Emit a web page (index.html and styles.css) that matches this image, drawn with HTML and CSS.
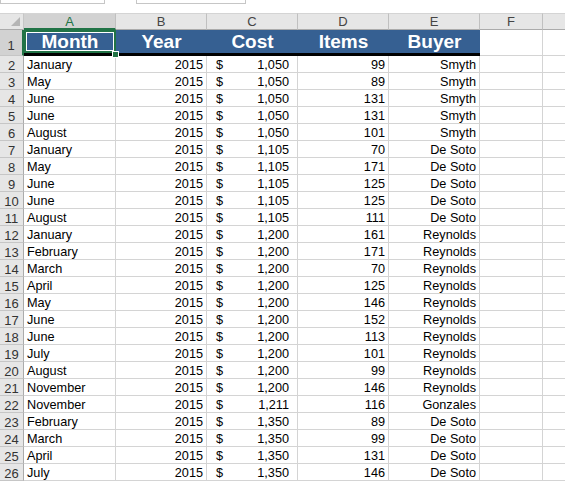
FILE: index.html
```html
<!DOCTYPE html>
<html>
<head>
<meta charset="utf-8">
<link rel="stylesheet" href="styles.css">
</head>
<body>
<div class="topbar">
  <div class="namebox"></div>
  <div class="fxbox"></div>
</div>
<div class="sheet" id="sheet">
  <div class="corner"><span class="tri"></span></div>
  <div class="colh sel">A</div>
  <div class="colh">B</div>
  <div class="colh">C</div>
  <div class="colh">D</div>
  <div class="colh">E</div>
  <div class="colh">F</div>
  <div class="colh last"></div>

  <div class="rowh rowh1 sel">1</div>
  <div class="hd hdA">Month<span class="selbox"></span><span class="handle"></span></div>
  <div class="hd">Year</div>
  <div class="hd">Cost</div>
  <div class="hd">Items</div>
  <div class="hd">Buyer</div>
  <div class="c r1"></div>
  <div class="c r1 last"></div>
</div>
<script src="app.js"></script>
</body>
</html>
```

FILE: app.js
```js
var rows = [
["January",1050,99,"Smyth"],
["May",1050,89,"Smyth"],
["June",1050,131,"Smyth"],
["June",1050,131,"Smyth"],
["August",1050,101,"Smyth"],
["January",1105,70,"De Soto"],
["May",1105,171,"De Soto"],
["June",1105,125,"De Soto"],
["June",1105,125,"De Soto"],
["August",1105,111,"De Soto"],
["January",1200,161,"Reynolds"],
["February",1200,171,"Reynolds"],
["March",1200,70,"Reynolds"],
["April",1200,125,"Reynolds"],
["May",1200,146,"Reynolds"],
["June",1200,152,"Reynolds"],
["June",1200,113,"Reynolds"],
["July",1200,101,"Reynolds"],
["August",1200,99,"Reynolds"],
["November",1200,146,"Reynolds"],
["November",1211,116,"Gonzales"],
["February",1350,89,"De Soto"],
["March",1350,99,"De Soto"],
["April",1350,131,"De Soto"],
["July",1350,146,"De Soto"]
];
var sheet = document.getElementById("sheet");
function cell(cls, html) {
  var d = document.createElement("div");
  d.className = cls;
  d.innerHTML = html;
  sheet.appendChild(d);
}
function fmt(n) {
  var s = String(n);
  return s.length > 3 ? s.slice(0, s.length - 3) + "," + s.slice(-3) : s;
}
rows.forEach(function (r, i) {
  cell("rowh", String(i + 2));
  cell("c left", r[0]);
  cell("c right", "2015");
  cell("c acct", '<span>$</span><span>' + fmt(r[1]) + '</span>');
  cell("c right", String(r[2]));
  cell("c right", r[3]);
  cell("c", "");
  cell("c last", "");
});
```

FILE: styles.css
```css
html, body {
  margin: 0;
  padding: 0;
  background: #fff;
  overflow: hidden;
}
body {
  font-family: "Liberation Sans", Arial, sans-serif;
  width: 565px;
  height: 484px;
}
.topbar {
  height: 13px;
  display: flex;
  background: #fff;
  box-sizing: border-box;
}
.namebox {
  width: 105px;
  height: 4px;
  box-sizing: border-box;
  border: 1px solid #c6c6c6;
  border-top: none;
  background: #fff;
}
.fxbox {
  margin-left: 31px;
  width: 110px;
  height: 4px;
  box-sizing: border-box;
  border: 1px solid #c6c6c6;
  border-top: none;
  background: #fff;
}
.sheet {
  display: grid;
  grid-template-columns: 24px 92px 91px 91px 91px 91px 63px 1fr;
  grid-template-rows: 17px 26px;
  grid-auto-rows: 17px;
}
.sheet > div {
  box-sizing: border-box;
  white-space: nowrap;
  overflow: hidden;
}
.corner {
  background: #e6e6e6;
  border-right: 1px solid #c6c6c6;
  border-bottom: 1px solid #ababab;
  border-top: 1px solid #d4d4d4;
  position: relative;
}
.tri {
  position: absolute;
  right: 3px;
  bottom: 3px;
  width: 0;
  height: 0;
  border-left: 9px solid transparent;
  border-bottom: 9px solid #b5b5b5;
}
.colh {
  background: #e6e6e6;
  border-top: 1px solid #d4d4d4;
  border-right: 1px solid #c0c0c0;
  border-bottom: 1px solid #ababab;
  text-align: center;
  font-size: 13px;
  line-height: 16px;
  color: #444;
}
.colh.sel {
  background: #d2d2d2;
  color: #217346;
  border-bottom: 2px solid #217346;
}
.colh.last {
  border-right: none;
}
.rowh {
  background: #e6e6e6;
  border-right: 1px solid #ababab;
  border-bottom: 1px solid #c6c6c6;
  text-align: center;
  font-size: 13px;
  line-height: 17px;
  padding-top: 1px;
  color: #333;
}
.rowh1 {
  line-height: 30px;
}
.rowh.sel {
  background: #d2d2d2;
  color: #333;
  border-right: 2px solid #217346;
}
.hd {
  background: #366092;
  color: #fff;
  font-weight: bold;
  font-size: 19px;
  text-align: center;
  line-height: 24px;
  border-bottom: 3px solid #000;
  position: relative;
  overflow: visible !important;
}
.hdA {
  z-index: 2;
}
.selbox {
  position: absolute;
  left: 0;
  top: 0;
  width: 92px;
  height: 23px;
  box-sizing: border-box;
  border: 2px solid #217346;
  box-shadow: inset 0 0 0 1px #fff;
}
.handle {
  position: absolute;
  left: 88px;
  top: 21px;
  width: 5px;
  height: 5px;
  background: #217346;
  border: 1px solid #fff;
}
.c {
  border-right: 1px solid #d4d4d4;
  border-bottom: 1px solid #d4d4d4;
  font-size: 12.7px;
  line-height: 17px;
  padding: 1px 3px 0;
  color: #000;
}
.c.last {
  border-right: none;
}
.left {
  text-align: left;
}
.right {
  text-align: right;
}
.acct {
  display: flex;
  justify-content: space-between;
  padding: 1px 8px 0 9px;
}
```
